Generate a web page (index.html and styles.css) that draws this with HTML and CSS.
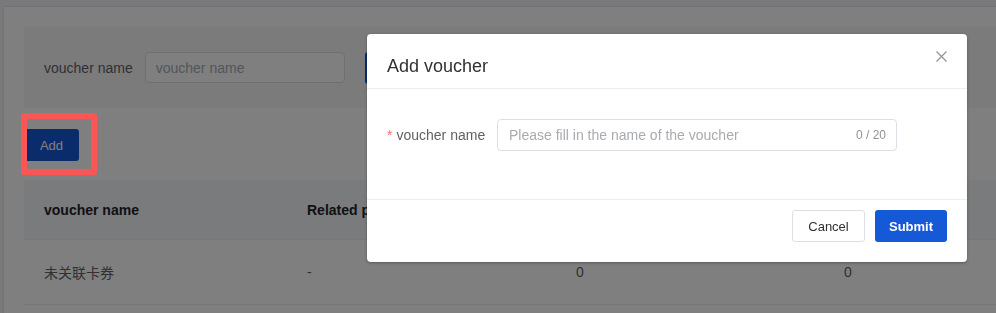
FILE: index.html
```html
<!DOCTYPE html>
<html lang="en">
<head>
    <meta charset="UTF-8">
    <meta name="viewport" content="width=device-width, initial-scale=1.0">
    <title>Vouchers</title>
    <link rel="stylesheet" href="styles.css">
</head>
<body>
    <div class="page">
        <div class="card">
            <div class="search">
                <label class="search-label" for="search-name">voucher name</label>
                <input type="text" class="search-input" id="search-name" placeholder="voucher name">
                <button class="btn btn-primary search-btn"></button>
            </div>
            <div class="toolbar">
                <button class="btn btn-primary btn-add">Add</button>
            </div>
            <div class="table">
                <div class="row row-head">
                    <div class="cell">voucher name</div>
                    <div class="cell">Related products</div>
                    <div class="cell"></div>
                    <div class="cell"></div>
                </div>
                <div class="row">
                    <div class="cell">未关联卡券</div>
                    <div class="cell">-</div>
                    <div class="cell">0</div>
                    <div class="cell">0</div>
                </div>
            </div>
        </div>
    </div>

    <div class="mask"></div>
    <div class="highlight"></div>

    <div class="dialog">
        <div class="dialog-header">
            <span class="dialog-title">Add voucher</span>
            <button class="dialog-close" aria-label="Close">
                <svg width="11" height="11" viewBox="0 0 11 11">
                    <path d="M0.5 0.5 L10.5 10.5 M10.5 0.5 L0.5 10.5" stroke="#909399" stroke-width="1.2" fill="none"/>
                </svg>
            </button>
        </div>
        <div class="dialog-body">
            <div class="form-item">
                <label class="form-label" for="voucher-name"><span class="required">*</span>voucher name</label>
                <div class="input-wrap">
                    <input type="text" class="form-input" id="voucher-name" maxlength="20" placeholder="Please fill in the name of the voucher">
                    <span class="counter">0 / 20</span>
                </div>
            </div>
        </div>
        <div class="dialog-footer">
            <button class="btn btn-default btn-cancel">Cancel</button>
            <button class="btn btn-primary btn-submit">Submit</button>
        </div>
    </div>
</body>
</html>
```

FILE: styles.css
```css
html, body {
    overflow: hidden;
}
body {
    margin: 0;
    height: 313px;
    background-color: #f2f3f7;
    font-family: "Liberation Sans", Arial, "Noto Sans CJK SC", sans-serif;
    font-size: 14px;
    color: #606266;
}
.page {
    padding: 6px 0 0 3px;
}
.card {
    width: 994px;
    height: 310px;
    box-sizing: border-box;
    background: #fff;
    border: 1px solid #e4e6ea;
    padding: 20px 0 0 20px;
    overflow: hidden;
}
.search {
    display: flex;
    align-items: center;
    height: 81px;
    padding: 0 20px;
    background: #f6f7f9;
}
.search-label {
    margin-right: 12px;
    color: #606266;
}
.search-input {
    width: 200px;
    height: 31px;
    box-sizing: border-box;
    padding: 0 10px;
    border: 1px solid #dcdfe6;
    border-radius: 4px;
    font-family: inherit;
    font-size: 14px;
}
.search-input::placeholder {
    color: #a8abb2;
}
.search-btn {
    margin-left: 20px;
    width: 70px;
    height: 32px;
}
.btn {
    border: 1px solid transparent;
    border-radius: 3px;
    font-family: inherit;
    font-size: 13px;
    cursor: pointer;
    box-sizing: border-box;
}
.btn-primary {
    background: #1559d6;
    color: #fff;
}
.btn-default {
    background: #fff;
    border-color: #dcdfe6;
    color: #303133;
}
.toolbar {
    padding: 21px 0 19px;
}
.btn-add {
    width: 55px;
    height: 32px;
    padding: 0;
}
.row {
    display: grid;
    grid-template-columns: 263px 269px 268px 1fr;
    align-items: center;
    height: 64px;
    border-bottom: 1px solid #ebeef5;
}
.row-head {
    height: 59px;
    background: #f5f6f8;
    font-weight: bold;
    color: #1f2329;
}
.cell {
    padding-left: 20px;
    white-space: nowrap;
}

/* modal */
.mask {
    position: fixed;
    inset: 0;
    background: rgba(0, 0, 0, 0.5);
}
.highlight {
    position: absolute;
    left: 21px;
    top: 113px;
    width: 76px;
    height: 62px;
    box-sizing: border-box;
    border: 6px solid #fb5656;
    border-radius: 3px;
}
.dialog {
    position: absolute;
    left: 367px;
    top: 34px;
    width: 600px;
    background: #fff;
    border-radius: 4px;
    box-shadow: 0 1px 3px rgba(0, 0, 0, 0.3);
}
.dialog-header {
    position: relative;
    padding: 20px 20px 10px;
    border-bottom: 1px solid #ebeef5;
}
.dialog-title {
    display: block;
    font-size: 18px;
    line-height: 24px;
    color: #303133;
}
.dialog-close {
    position: absolute;
    top: 17px;
    right: 20px;
    width: 11px;
    height: 11px;
    padding: 0;
    border: 0;
    background: none;
    display: flex;
}
.dialog-body {
    padding: 30px 20px 48px;
}
.form-item {
    display: flex;
    align-items: center;
}
.form-label {
    flex: none;
    width: 110px;
    box-sizing: border-box;
    padding-right: 12px;
    text-align: right;
    white-space: nowrap;
    color: #606266;
}
.required {
    color: #f56c6c;
    margin-right: 4px;
}
.input-wrap {
    display: flex;
    align-items: center;
    width: 400px;
    height: 32px;
    box-sizing: border-box;
    padding: 0 10px 0 11px;
    border: 1px solid #dcdfe6;
    border-radius: 4px;
}
.form-input {
    flex: 1;
    min-width: 0;
    border: 0;
    outline: none;
    padding: 0;
    font-family: inherit;
    font-size: 14px;
    color: #303133;
}
.form-input::placeholder {
    color: #a8abb2;
}
.counter {
    font-size: 12px;
    color: #909399;
}
.dialog-footer {
    display: flex;
    justify-content: flex-end;
    gap: 10px;
    padding: 10px 20px 20px;
    border-top: 1px solid #ebeef5;
}
.btn-cancel {
    width: 73px;
    height: 32px;
}
.btn-submit {
    width: 72px;
    height: 32px;
    font-weight: bold;
}
```
